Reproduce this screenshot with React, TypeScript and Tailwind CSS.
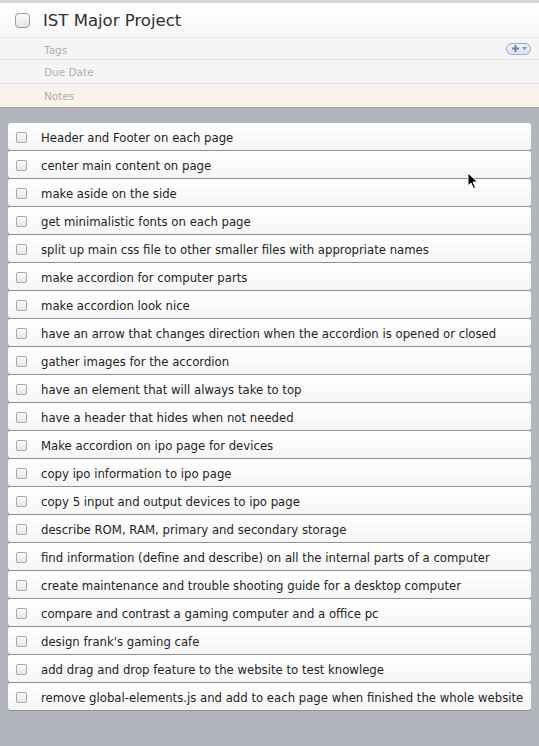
const tasks = [
  "Header and Footer on each page",
  "center main content on page",
  "make aside on the side",
  "get minimalistic fonts on each page",
  "split up main css file to other smaller files with appropriate names",
  "make accordion for computer parts",
  "make accordion look nice",
  "have an arrow that changes direction when the accordion is opened or closed",
  "gather images for the accordion",
  "have an element that will always take to top",
  "have a header that hides when not needed",
  "Make accordion on ipo page for devices",
  "copy ipo information to ipo page",
  "copy 5 input and output devices to ipo page",
  "describe ROM, RAM, primary and secondary storage",
  "find information (define and describe) on all the internal parts of a computer",
  "create maintenance and trouble shooting guide for a desktop computer",
  "compare and contrast a gaming computer and a office pc",
  "design frank's gaming cafe",
  "add drag and drop feature to the website to test knowlege",
  "remove global-elements.js and add to each page when finished the whole website",
];

function Checkbox({ big }: { big?: boolean }) {
  return (
    <div
      className={
        big
          ? "w-[15px] h-[15px] shrink-0 rounded-[4px] border border-[#9d9d9d] bg-gradient-to-b from-[#fdfdfd] to-[#e4e4e4] shadow-[inset_0_1px_0_#fff]"
          : "w-[11px] h-[11px] shrink-0 rounded-[2px] border border-[#a8a8a8] bg-gradient-to-b from-[#fbfbfb] to-[#e6e6e6]"
      }
    />
  );
}

export default function App() {
  return (
    <div
      className="relative w-[539px] h-[746px] bg-[#b3b5bd] overflow-hidden"
      style={{ fontFamily: '"DejaVu Sans", "Liberation Sans", sans-serif' }}
    >
      {/* Header */}
      <div className="border-t-[3px] border-[#d4d4d4]">
        <div className="h-[35px] flex items-center gap-[13px] pl-[15px] bg-gradient-to-b from-white to-[#f6f6f6] border-b border-[#e3e3e3]">
          <Checkbox big />
          <div className="text-[16.5px] text-[#2e2e2e] leading-none pt-[3px]">IST Major Project</div>
        </div>
        <div className="h-[22px] flex items-center justify-between pl-[44px] pr-[8px] bg-[#f5f5f5] border-b border-[#e4e4e4]">
          <span className="text-[10.5px] text-[#b0b0b0] pt-[4px]">Tags</span>
          <div className="w-[25px] h-[12px] rounded-full border border-[#9aabcb] bg-gradient-to-b from-[#eef2f9] to-[#d9e2f1] flex items-center justify-center gap-[2px]">
            <svg width="9" height="9" viewBox="0 0 9 9">
              <path d="M4.5 1v7M1 4.5h7" stroke="#6d82aa" strokeWidth="2" />
            </svg>
            <svg width="5" height="4" viewBox="0 0 5 4">
              <path d="M0 0h5L2.5 3z" fill="#7d8fb2" />
            </svg>
          </div>
        </div>
        <div className="h-[24px] flex items-center pl-[44px] bg-[#f5f5f5] border-b border-[#e4e4e4]">
          <span className="text-[10.5px] text-[#b0b0b0] pt-[3px]">Due Date</span>
        </div>
        <div className="h-[24px] flex items-center pl-[44px] bg-[#f8f4ec] border-b border-[#aaa293]">
          <span className="text-[10.5px] text-[#b0aca6] pt-[3px]">Notes</span>
        </div>
      </div>

      {/* Task list */}
      <div className="mt-[15px] mx-[8px] flex flex-col gap-[1px]">
        {tasks.map((t) => (
          <div
            key={t}
            className="h-[27px] flex items-center gap-[14px] pl-[8px] pt-[2px] rounded-[3px] bg-gradient-to-b from-white to-[#f5f5f5] shadow-[0_1px_0_#8e8f94]"
          >
            <Checkbox />
            <span className="text-[11.7px] text-[#1e1e1e] whitespace-nowrap pt-[2px]">{t}</span>
          </div>
        ))}
      </div>

      {/* Mouse pointer */}
      <svg className="absolute left-[467px] top-[172px]" width="12" height="18" viewBox="0 0 12 18">
        <path d="M1 1v13l3-3 2.5 5.5 2-1L6 10h4.5z" fill="#000" stroke="#fff" strokeWidth="1" />
      </svg>
    </div>
  );
}
